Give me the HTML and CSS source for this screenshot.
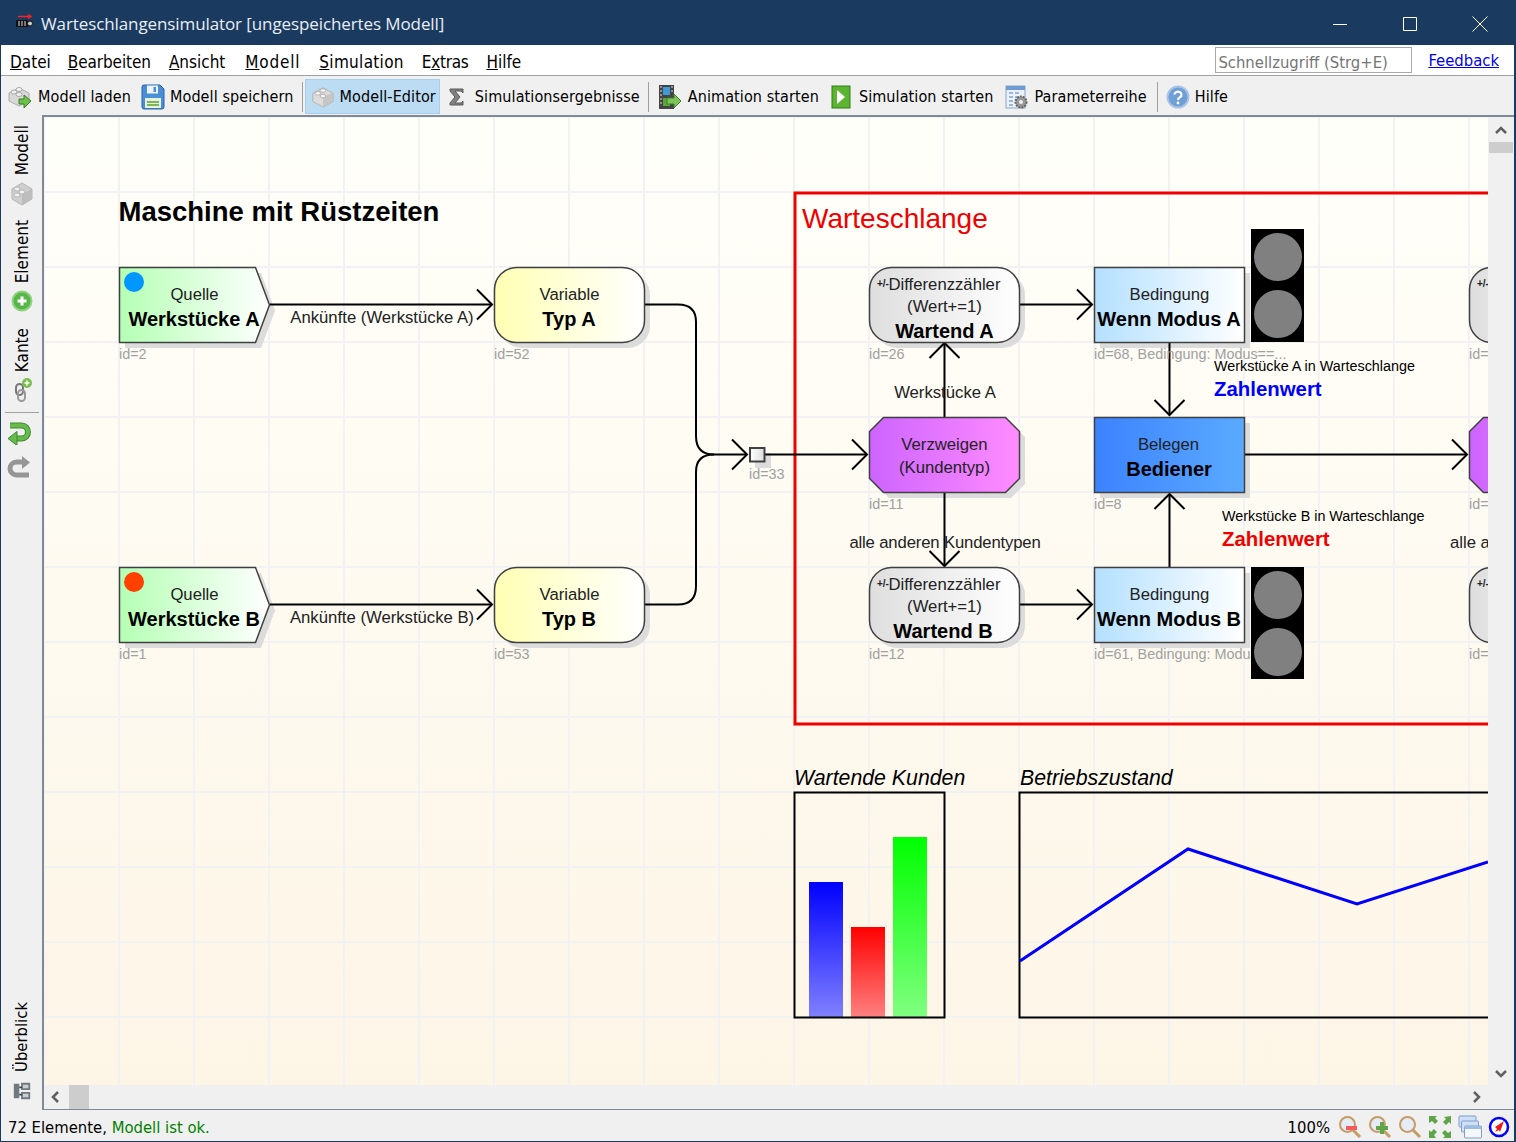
FILE: index.html
```html
<!DOCTYPE html>
<html lang="de">
<head>
  <meta charset="UTF-8" />
  <title>Warteschlangensimulator</title>
  <link rel="stylesheet" href="styles.css">
</head>
<body>
<div class="window">

  <header class="titlebar">
    <svg class="app-icon" width="18" height="14" viewBox="0 0 18 14">
      <path d="M2 2.500h13M12 .5l3 2-3 2" fill="none" stroke="#ff2020" stroke-width="1.300"/>
      <path d="M.5 6.500h11v6H.5z" fill="#111" stroke="#111"/>
      <path d="M3 7v5M6 7v5M9 7v5" stroke="#ddd"/>
      <circle cx="14" cy="9.500" r="2.500" fill="#ccc" stroke="#111"/>
    </svg>
    <span class="title">Warteschlangensimulator [ungespeichertes Modell]</span>
    <div class="win-buttons">
      <svg width="16" height="16" viewBox="0 0 16 16"><path d="M1 8.500h14" stroke="#fff"/></svg>
      <svg width="16" height="16" viewBox="0 0 16 16"><path d="M1.500 1.500h13v13h-13z" fill="none" stroke="#fff"/></svg>
      <svg width="16" height="16" viewBox="0 0 16 16"><path d="M.5.500l15 15M15.500.500l-15 15" stroke="#fff"/></svg>
    </div>
  </header>

  <nav class="menubar">
    <span class="menu-item"><u>D</u>atei</span>
    <span class="menu-item menu-bearbeiten"><u>B</u>earbeiten</span>
    <span class="menu-item"><u>A</u>nsicht</span>
    <span class="menu-item menu-modell"><u>M</u>odell</span>
    <span class="menu-item menu-simulation"><u>S</u>imulation</span>
    <span class="menu-item menu-extras">E<u>x</u>tras</span>
    <span class="menu-item"><u>H</u>ilfe</span>
    <span class="quick">Schnellzugriff (Strg+E)</span>
    <a class="feedback" href="#">Feedback</a>
  </nav>

  <div class="toolbar">
    <button class="tool">
      <svg width="26" height="26" viewBox="0 0 26 26">
        <path d="M2 9l10-5 10 5v8l-10 5-10-5z" fill="#d8d8d8" stroke="#aaa"/>
        <ellipse cx="7" cy="8" rx="3" ry="2" fill="#f2f2f2" stroke="#aaa"/>
        <ellipse cx="12" cy="5.500" rx="3" ry="2" fill="#f2f2f2" stroke="#aaa"/>
        <ellipse cx="12" cy="10.500" rx="3" ry="2" fill="#f2f2f2" stroke="#aaa"/>
        <path d="M12 15h5v-4l7 6-7 7v-4h-5z" fill="#6fbf4a" stroke="#3c7d28"/>
      </svg>
      Modell laden
    </button>
    <button class="tool">
      <svg width="24" height="26" viewBox="0 0 24 26">
        <path d="M1 3a2 2 0 0 1 2-2h16l4 4v18a2 2 0 0 1-2 2H3a2 2 0 0 1-2-2z" fill="#4a8fd6" stroke="#2a62a8"/>
        <path d="M6 1.500h11v8H6z" fill="#eef4fb"/>
        <path d="M12.500 3h2.500v5h-2.500z" fill="#4a8fd6"/>
        <path d="M4 14h16v10H4z" fill="#e6f2da"/>
        <path d="M6 18h12M6 21h12" stroke="#7db55c" stroke-width="2"/>
      </svg>
      Modell speichern
    </button>
    <span class="tool-sep"></span>
    <button class="tool tool-active">
      <svg width="24" height="26" viewBox="0 0 26 26">
        <path d="M2 9l11-6 11 6v9l-11 6-11-6z" fill="#dcdcdc" stroke="#b0b0b0"/>
        <path d="M13 13l11-5v10l-11 6z" fill="#c6c6c6"/>
        <ellipse cx="7.500" cy="9" rx="3" ry="2" fill="#f6f6f6" stroke="#b0b0b0"/>
        <ellipse cx="13" cy="6" rx="3" ry="2" fill="#f6f6f6" stroke="#b0b0b0"/>
        <ellipse cx="13" cy="12" rx="3" ry="2" fill="#f6f6f6" stroke="#b0b0b0"/>
      </svg>
      Modell-Editor
    </button>
    <button class="tool">
      <svg class="sigma" width="18" height="20" viewBox="0 0 18 20">
        <path d="M2 2h13v4l-2-2H7l5 6-5 6h6l2-2v4H2v-2l5-6-5-6z" fill="#808080" stroke="#5c5c5c"/>
      </svg>
      Simulationsergebnisse
    </button>
    <span class="tool-sep"></span>
    <button class="tool">
      <svg width="26" height="26" viewBox="0 0 24 26">
        <path d="M1 1h15v24H1z" fill="#444"/>
        <path d="M5 3h7v8H5z" fill="#3f9bd8"/>
        <path d="M5 14h7v8H5z" fill="#59a83a"/>
        <path d="M2 3h2M2 7h2M2 11h2M2 15h2M2 19h2M13 3h2M13 7h2" stroke="#ddd"/>
        <path d="M9 14h7v-4l7 7-7 7v-4H9z" fill="#7cc35a" stroke="#3f7d2a"/>
      </svg>
      Animation starten
    </button>
    <button class="tool tool-narrow-icon">
      <svg width="20" height="24" viewBox="0 0 20 24">
        <rect x="1" y="1" width="18" height="22" fill="#5bb531" stroke="#2e7d16"/>
        <path d="M6 5l8 7-8 7z" fill="#fff"/>
      </svg>
      Simulation starten
    </button>
    <button class="tool tool-params">
      <svg width="24" height="26" viewBox="0 0 24 26">
        <rect x="1" y="2" width="19" height="22" fill="#eaf1fa" stroke="#8aa6c8"/>
        <path d="M1 2h19v4H1z" fill="#6f9bd1"/>
        <path d="M4 9h4M10 9h4M4 13h4M10 13h4M4 17h4M4 21h4" stroke="#9db6d4" stroke-width="2"/>
        <circle cx="16" cy="18" r="5.500" fill="#9a9a9a" stroke="#666" stroke-width="2" stroke-dasharray="2 1"/>
        <circle cx="16" cy="18" r="2" fill="#eee"/>
      </svg>
      Parameterreihe
    </button>
    <span class="tool-sep"></span>
    <button class="tool">
      <svg width="24" height="24" viewBox="0 0 24 24">
        <circle cx="12" cy="12" r="10.500" fill="#6e9fd6" stroke="#a9c4e4" stroke-width="2"/>
        <path d="M8.500 9.500a3.500 3 0 1 1 5.500 2.600c-1.400 1-2 1.400-2 3" fill="none" stroke="#fff" stroke-width="2.200"/>
        <circle cx="12" cy="18" r="1.400" fill="#fff"/>
      </svg>
      Hilfe
    </button>
  </div>

  <div class="workspace">
    <aside class="sidebar">
      <button class="side-tab">
        <span class="side-label">Modell</span>
        <svg width="24" height="26" viewBox="0 0 24 26">
          <path d="M2 8l10-6 10 6v10l-10 6-10-6z" fill="#cfcfcf" stroke="#b5b5b5"/>
          <path d="M12 13l10-5v10l-10 6z" fill="#bdbdbd"/>
          <ellipse cx="7" cy="8" rx="3" ry="2" fill="#f2f2f2" stroke="#b5b5b5"/>
          <ellipse cx="7" cy="14" rx="3" ry="2" fill="#f2f2f2" stroke="#b5b5b5"/>
          <ellipse cx="12" cy="11" rx="3" ry="2" fill="#f2f2f2" stroke="#b5b5b5"/>
        </svg>
      </button>
      <button class="side-tab">
        <span class="side-label">Element</span>
        <svg width="22" height="22" viewBox="0 0 22 22">
          <circle cx="11" cy="11" r="9.500" fill="#58b648" stroke="#8fd37f" stroke-width="2"/>
          <path d="M11 6.500v9M6.500 11h9" stroke="#fff" stroke-width="3"/>
        </svg>
      </button>
      <button class="side-tab">
        <span class="side-label">Kante</span>
        <svg width="22" height="24" viewBox="0 0 22 24">
          <rect x="5" y="6" width="7" height="11" rx="3.500" fill="none" stroke="#777" stroke-width="2"/>
          <rect x="7" y="12" width="7" height="11" rx="3.500" fill="none" stroke="#999" stroke-width="2"/>
          <circle cx="16" cy="5" r="5" fill="#7dbf4f"/>
          <path d="M16 2.500v5M13.500 5h5" stroke="#fff" stroke-width="1.500"/>
        </svg>
      </button>
      <span class="side-sep"></span>
      <button class="side-icon">
        <svg width="24" height="24" viewBox="0 0 24 24">
          <path d="M3 4.500h11.500a6.500 6.500 0 0 1 0 13H8" fill="none" stroke="#3f8a30" stroke-width="6"/>
          <path d="M3 4.500h11.500a6.500 6.500 0 0 1 0 13H8" fill="none" stroke="#66bb4c" stroke-width="4"/>
          <path d="M10 10.500v14L1 17.500z" fill="#66bb4c" stroke="#3f8a30"/>
        </svg>
      </button>
      <button class="side-icon">
        <svg width="24" height="24" viewBox="0 0 24 24">
          <path d="M22 19H9.500a6.500 6.500 0 0 1 0-13H16" fill="none" stroke="#969696" stroke-width="5"/>
          <path d="M15 0v13l8-6.500z" fill="#969696"/>
        </svg>
      </button>
      <button class="side-tab side-tab-bottom">
        <span class="side-label">Überblick</span>
        <svg width="20" height="20" viewBox="0 0 22 20">
          <path d="M2 2h6v16H2zM10 1h10v8H10zM10 11h10v8H10z" fill="#6f7a80"/>
          <path d="M12 3h6v4h-6zM12 13h6v4h-6z" fill="#c8d0d4"/>
          <path d="M8 6h3M8 14h3" stroke="#3d4548" stroke-width="2"/>
        </svg>
      </button>
    </aside>

    <div class="editor">
      <main class="canvas">
        <svg class="diagram" width="1444" height="968" viewBox="44 117 1444 968">
          <defs>
            <linearGradient id="g-green"><stop offset="0" stop-color="#b4ffb4"/><stop offset="1" stop-color="#fff"/></linearGradient>
            <linearGradient id="g-yellow"><stop offset="0" stop-color="#ffffb4"/><stop offset="1" stop-color="#fff"/></linearGradient>
            <linearGradient id="g-grey"><stop offset="0" stop-color="#dedede"/><stop offset="1" stop-color="#fff"/></linearGradient>
            <linearGradient id="g-blue"><stop offset="0" stop-color="#b4e0ff"/><stop offset="1" stop-color="#fff"/></linearGradient>
            <linearGradient id="g-purple"><stop offset="0" stop-color="#cd64ff"/><stop offset="1" stop-color="#ff8cff"/></linearGradient>
            <linearGradient id="g-royal"><stop offset="0" stop-color="#3c82ff"/><stop offset="1" stop-color="#5aaaff"/></linearGradient>
            <linearGradient id="g-junction"><stop offset="0" stop-color="#fff"/><stop offset="1" stop-color="#dcdcdc"/></linearGradient>
            <linearGradient id="g-bar-blue" x2="0" y2="1"><stop offset="0" stop-color="#0000ff"/><stop offset="1" stop-color="#8080ff"/></linearGradient>
            <linearGradient id="g-bar-red" x2="0" y2="1"><stop offset="0" stop-color="#ff0000"/><stop offset="1" stop-color="#ff8080"/></linearGradient>
            <linearGradient id="g-bar-green" x2="0" y2="1"><stop offset="0" stop-color="#00ff00"/><stop offset="1" stop-color="#80ff80"/></linearGradient>
            <path id="arrow-r" d="M-15-15L0 0L-15 15" fill="none"/>
            <path id="shape-source" d="M0 0H136L150 37.500L136 75H0Z"/>
            <rect id="shape-round" width="150" height="75" rx="22" ry="22"/>
            <rect id="shape-rect" width="150" height="75"/>
            <path id="shape-branch" d="M14 0H136L150 14V61L136 75H14L0 61V14Z"/>
          </defs>

          <!-- Ueberschrift -->
          <text class="heading" x="118.500" y="221">Maschine mit Rüstzeiten</text>

          <!-- Warteschlange Rahmen -->
          <rect class="frame" x="795" y="193" width="720" height="531"/>
          <text class="frame-title" x="802" y="228">Warteschlange</text>

          <!-- Schatten -->
          <g class="shadows">
            <use href="#shape-source" x="125" y="273"/>
            <use href="#shape-source" x="125" y="573"/>
            <use href="#shape-round" x="500" y="273"/>
            <use href="#shape-round" x="500" y="573"/>
            <use href="#shape-round" x="875" y="273"/>
            <use href="#shape-round" x="875" y="573"/>
            <use href="#shape-rect" x="1100" y="273"/>
            <use href="#shape-rect" x="1100" y="573"/>
            <use href="#shape-rect" x="1100" y="423"/>
            <use href="#shape-branch" x="875" y="423"/>
            <rect x="755" y="453" width="16" height="15"/>
          </g>

          <!-- Kanten -->
          <g class="edges">
            <path d="M270 304.500H492"/>
            <path d="M270 604.500H492"/>
            <path d="M645 304.500H678Q696 304.500 696 322V436Q696 454.500 714 454.500H747"/>
            <path d="M645 604.500H678Q696 604.500 696 586V472Q696 454.500 714 454.500"/>
            <path d="M765 454.500H867"/>
            <path d="M944.500 417V343"/>
            <path d="M944.500 492V566"/>
            <path d="M1020 304.500H1092"/>
            <path d="M1020 604.500H1092"/>
            <path d="M1169.500 342V415"/>
            <path d="M1169.500 567V494"/>
            <path d="M1245 454.500H1467"/>
            <use href="#arrow-r" x="492" y="304.500"/>
            <use href="#arrow-r" x="492" y="604.500"/>
            <use href="#arrow-r" x="747" y="454.500"/>
            <use href="#arrow-r" x="867" y="454.500"/>
            <use href="#arrow-r" x="1092" y="304.500"/>
            <use href="#arrow-r" x="1092" y="604.500"/>
            <use href="#arrow-r" x="1467" y="454.500"/>
            <use href="#arrow-r" transform="translate(944.500 343) rotate(-90)"/>
            <use href="#arrow-r" transform="translate(944.500 566) rotate(90)"/>
            <use href="#arrow-r" transform="translate(1169.500 415) rotate(90)"/>
            <use href="#arrow-r" transform="translate(1169.500 494) rotate(-90)"/>
          </g>
          <rect class="junction" x="750" y="448" width="14.500" height="13.500" fill="url(#g-junction)"/>

          <!-- Stationen -->
          <g class="nodes">
            <use href="#shape-source" x="119.500" y="267.500" fill="url(#g-green)"/>
            <use href="#shape-source" x="119.500" y="567.500" fill="url(#g-green)"/>
            <use href="#shape-round" x="494.500" y="267.500" fill="url(#g-yellow)"/>
            <use href="#shape-round" x="494.500" y="567.500" fill="url(#g-yellow)"/>
            <use href="#shape-round" x="869.500" y="267.500" fill="url(#g-grey)"/>
            <use href="#shape-round" x="869.500" y="567.500" fill="url(#g-grey)"/>
            <use href="#shape-rect" x="1094.500" y="267.500" fill="url(#g-blue)"/>
            <use href="#shape-rect" x="1094.500" y="567.500" fill="url(#g-blue)"/>
            <use href="#shape-rect" x="1094.500" y="417.500" fill="url(#g-royal)"/>
            <use href="#shape-branch" x="869.500" y="417.500" fill="url(#g-purple)"/>
            <use href="#shape-branch" x="1469.500" y="417.500" fill="url(#g-purple)"/>
            <use href="#shape-round" x="1469.500" y="267.500" fill="url(#g-grey)"/>
            <use href="#shape-round" x="1469.500" y="567.500" fill="url(#g-grey)"/>
          </g>
          <circle cx="134" cy="282" r="10" fill="#0096ff"/>
          <circle cx="134" cy="582" r="10" fill="#ff4100"/>

          <!-- IDs -->
          <g class="node-id">
            <text x="119" y="359">id=2</text>
            <text x="119" y="659">id=1</text>
            <text x="494" y="359">id=52</text>
            <text x="494" y="659">id=53</text>
            <text x="749" y="479">id=33</text>
            <text x="869" y="359">id=26</text>
            <text x="869" y="509">id=11</text>
            <text x="869" y="659">id=12</text>
            <text x="1094" y="359">id=68, Bedingung: Modus==...</text>
            <text x="1094" y="509">id=8</text>
            <text x="1094" y="659">id=61, Bedingung: Modus==...</text>
            <text x="1469" y="359">id=71</text>
            <text x="1469" y="509">id=14</text>
            <text x="1469" y="659">id=70</text>
          </g>

          <!-- Ampeln -->
          <rect x="1251" y="229" width="53" height="113" fill="#000"/>
          <circle cx="1278" cy="257" r="24" fill="#808080"/>
          <circle cx="1278" cy="314" r="24" fill="#808080"/>
          <rect x="1251" y="567" width="53" height="112" fill="#000"/>
          <circle cx="1278" cy="595" r="24" fill="#808080"/>
          <circle cx="1278" cy="652" r="24" fill="#808080"/>

          <!-- Texte in den Stationen -->
          <g class="node-text">
            <text x="194.500" y="300">Quelle</text>
            <text x="194.500" y="600">Quelle</text>
            <text x="569.500" y="300">Variable</text>
            <text x="569.500" y="600">Variable</text>
            <text x="944.500" y="290">Differenzzähler</text>
            <text x="944.500" y="312">(Wert+=1)</text>
            <text x="944.500" y="590">Differenzzähler</text>
            <text x="944.500" y="612">(Wert+=1)</text>
            <text x="1169.500" y="300">Bedingung</text>
            <text x="1169.500" y="600">Bedingung</text>
            <text x="1168.500" y="450">Belegen</text>
            <text x="944.500" y="450">Verzweigen</text>
            <text x="944.500" y="473">(Kundentyp)</text>
          </g>
          <g class="node-name">
            <text x="194" y="326">Werkstücke A</text>
            <text x="194" y="626">Werkstücke B</text>
            <text x="569" y="326">Typ A</text>
            <text x="569" y="626">Typ B</text>
            <text x="944.500" y="338">Wartend A</text>
            <text x="943" y="638">Wartend B</text>
            <text x="1169" y="326">Wenn Modus A</text>
            <text x="1169" y="626">Wenn Modus B</text>
            <text x="1169" y="476">Bediener</text>
          </g>
          <g class="counter-mark">
            <text x="877" y="287">+/-</text>
            <text x="877" y="587">+/-</text>
            <text x="1477" y="287">+/-</text>
            <text x="1477" y="587">+/-</text>
          </g>

          <!-- Kantenbeschriftung -->
          <g class="edge-label">
            <text x="382" y="323">Ankünfte (Werkstücke A)</text>
            <text x="382" y="623">Ankünfte (Werkstücke B)</text>
            <text x="945" y="398">Werkstücke A</text>
            <text class="edge-label-tight" x="945" y="548">alle anderen Kundentypen</text>
          </g>
          <text class="edge-label-start" x="1450" y="548">alle anderen Kundentypen</text>

          <!-- Zaehler -->
          <text class="counter-label" x="1214" y="371">Werkstücke A in Warteschlange</text>
          <text class="counter-value counter-blue" x="1214" y="396">Zahlenwert</text>
          <text class="counter-label" x="1222" y="521">Werkstücke B in Warteschlange</text>
          <text class="counter-value counter-red" x="1222" y="546">Zahlenwert</text>

          <!-- Diagramme -->
          <text class="chart-title" x="794" y="785">Wartende Kunden</text>
          <rect x="809" y="882" width="34" height="135" fill="url(#g-bar-blue)"/>
          <rect x="851" y="927" width="34" height="90" fill="url(#g-bar-red)"/>
          <rect x="893" y="837" width="34" height="180" fill="url(#g-bar-green)"/>
          <rect class="chart-box" x="794.500" y="792.500" width="150" height="225"/>
          <text class="chart-title" x="1020" y="785">Betriebszustand</text>
          <rect class="chart-box" x="1019.500" y="792.500" width="520" height="225"/>
          <path class="chart-line" d="M1020 961L1188 849L1357 904L1488 862"/>
        </svg>
      </main>
      <div class="vscroll">
        <svg width="14" height="10" viewBox="0 0 14 10"><path d="M2 8l5-5 5 5" fill="none" stroke="#606060" stroke-width="2.500"/></svg>
        <span class="vscroll-thumb"></span>
        <svg class="vscroll-down" width="14" height="10" viewBox="0 0 14 10"><path d="M2 2l5 5 5-5" fill="none" stroke="#606060" stroke-width="2.500"/></svg>
      </div>
      <div class="hscroll">
        <svg width="10" height="14" viewBox="0 0 10 14"><path d="M8 2L3 7l5 5" fill="none" stroke="#606060" stroke-width="2.500"/></svg>
        <span class="hscroll-thumb"></span>
        <svg class="hscroll-right" width="10" height="14" viewBox="0 0 10 14"><path d="M2 2l5 5-5 5" fill="none" stroke="#606060" stroke-width="2.500"/></svg>
      </div>
    </div>
  </div>

  <footer class="statusbar">
    <span>72 Elemente, <span class="status-ok">Modell ist ok.</span></span>
    <div class="status-right">
      <span class="zoom-value">100%</span>
      <svg width="24" height="24" viewBox="0 0 24 24">
        <circle cx="9.500" cy="9.500" r="7.500" fill="#e4edf5" stroke="#c89a66" stroke-width="2"/>
        <path d="M15 15l7 7" stroke="#c89a66" stroke-width="3"/>
        <path d="M8 11h11v4H8z" fill="#f25c5c"/>
      </svg>
      <svg width="24" height="24" viewBox="0 0 24 24">
        <circle cx="9.500" cy="9.500" r="7.500" fill="#e4edf5" stroke="#c89a66" stroke-width="2"/>
        <path d="M15 15l7 7" stroke="#c89a66" stroke-width="3"/>
        <path d="M8 11h4V7h4v4h4v4h-4v4h-4v-4H8z" fill="#5da548"/>
      </svg>
      <svg width="24" height="24" viewBox="0 0 24 24">
        <circle cx="9.500" cy="9.500" r="7.500" fill="#e4edf5" stroke="#c89a66" stroke-width="2"/>
        <path d="M15 15l7 7" stroke="#c89a66" stroke-width="3"/>
      </svg>
      <svg width="24" height="24" viewBox="0 0 24 24">
        <path d="M1 1h8L7 3l3 3-3 3-3-3-3 2zM23 1v8l-2-2-3 3-3-3 3-3-2-2zM1 23v-8l2 2 3-3 3 3-3 3 2 3zM23 23h-8l2-2-3-3 3-3 3 3 3-2z" fill="#5da548"/>
      </svg>
      <svg width="24" height="24" viewBox="0 0 24 24">
        <rect x="1" y="1" width="17" height="11" rx="1" fill="#cfe0f5" stroke="#7d9ecb"/>
        <rect x="3.500" y="6" width="17" height="11" rx="1" fill="#cfe0f5" stroke="#7d9ecb"/>
        <rect x="6.500" y="11" width="17" height="12" rx="1" fill="#f4f8fc" stroke="#7d9ecb"/>
        <path d="M6.500 11h17v3h-17z" fill="#9cbce3"/>
      </svg>
      <svg width="22" height="22" viewBox="0 0 22 22">
        <circle cx="11" cy="11" r="9" fill="#fff" stroke="#0000ff" stroke-width="2.500"/>
        <path d="M16 5L7 11l2 2-2 3 4-2 1 2z" fill="#f01818"/>
      </svg>
    </div>
  </footer>

</div>
</body>
</html>
```
FILE: styles.css
```css
* {
  box-sizing: border-box;
  margin: 0;
  padding: 0;
}

body {
  font-family: 'DejaVu Sans Condensed', 'DejaVu Sans', sans-serif;
  font-stretch: condensed;
  background: #f0f0f0;
  color: #000;
  overflow: hidden;
}

button {
  background: none;
  border: none;
  font: inherit;
  color: inherit;
}

.window {
  width: 1516px;
  height: 1142px;
  display: flex;
  flex-direction: column;
  border-left: 1px solid #1b3a5f;
  border-right: 2px solid #1b3a5f;
  border-bottom: 1px solid #1b3a5f;
}

/* title bar */
.titlebar {
  height: 45px;
  flex: none;
  background: #1b3a5f;
  color: #fff;
  display: flex;
  align-items: center;
  padding: 2px 0 0 15px;
  font-family: 'Open Sans', sans-serif;
  font-stretch: normal;
  font-size: 17px;
}

.app-icon {
  margin-right: 7px;
  margin-top: -5px;
}

.title {
  letter-spacing: -0.1px;
  color: #e8eef5;
}

.win-buttons {
  margin-left: auto;
  display: flex;
  gap: 54px;
  padding-right: 26px;
}

/* menu */
.menubar {
  height: 31px;
  flex: none;
  background: #fff;
  border-bottom: 1px solid #a0a0a0;
  display: flex;
  align-items: center;
  padding: 3px 0 0 9px;
  gap: 18px;
  font-size: 17px;
}

.menu-bearbeiten {
  margin-left: -1px;
  letter-spacing: -0.1px;
}

.menu-modell {
  margin-left: 2px;
  letter-spacing: 0.8px;
}

.menu-simulation {
  margin-left: 1px;
  letter-spacing: 0.3px;
}

.menu-extras {
  letter-spacing: -0.3px;
}

.quick {
  margin: -3px 0 0 auto;
  width: 197px;
  height: 26px;
  border: 1px solid #a9a9a9;
  color: #757575;
  padding: 5px 2px 0;
  font-size: 16.500px;
  white-space: nowrap;
  overflow: hidden;
}

.feedback {
  color: #0000ee;
  font-size: 16.500px;
  margin: -3px 15px 0 -2px;
}

/* toolbar */
.toolbar {
  height: 39px;
  flex: none;
  background: #f0f0f0;
  display: flex;
  align-items: center;
  padding: 2px 0 0 1px;
  font-size: 16px;
  letter-spacing: 0.1px;
}

.tool {
  height: 35px;
  display: flex;
  align-items: center;
  gap: 5px;
  padding: 0 5px;
  white-space: nowrap;
  letter-spacing: inherit;
}

.tool-active {
  background: #bcdcf4;
  border: 1px solid #a8d0ee;
  padding: 0 3px 0 5px;
  margin-left: -1px;
}

.tool-narrow-icon svg {
  margin: 0 3px 0 2px;
}

.tool-params {
  margin: 0 2px;
}

.sigma {
  margin: 0 4px 0 3px;
}

.tool-sep {
  width: 1px;
  height: 30px;
  background: #a0a0a0;
  margin: 0 3px;
}

/* workspace */
.workspace {
  flex: 1;
  display: flex;
  min-height: 0;
}

.sidebar {
  width: 41px;
  flex: none;
  background: #f0f0f0;
  display: flex;
  flex-direction: column;
  align-items: center;
  padding-top: 10px;
  font-size: 17px;
}

.side-tab {
  display: flex;
  flex-direction: column;
  align-items: center;
  gap: 6px;
  margin-bottom: 13px;
}

.side-tab:nth-child(2) {
  margin-bottom: 16px;
}

.side-label {
  writing-mode: vertical-rl;
  transform: rotate(180deg);
}

.side-tab-bottom {
  margin-top: auto;
  margin-bottom: 9px;
  gap: 9px;
  font-size: 16.500px;
}

.side-sep {
  width: 34px;
  height: 1px;
  background: #a0a0a0;
  margin: -3px 0 3px;
}

.side-icon {
  height: 35px;
  display: flex;
  align-items: center;
  margin-right: 5px;
}

.editor {
  flex: 1;
  display: grid;
  grid-template-columns: 1444px 1fr;
  grid-template-rows: 968px 24px;
  border: 2px solid #7f8a96;
  border-right: none;
}

/* model canvas */
.canvas {
  overflow: hidden;
  background-color: #fffffa;
  background-image:
    linear-gradient(#f2f2f4 2px, transparent 2px),
    linear-gradient(90deg, #f2f2f4 2px, transparent 2px),
    linear-gradient(#fffffa, #fdf5e6);
  background-size: 75px 75px, 75px 75px, 100% 100%;
  background-position: 0 74px, 74px 0, 0 0;
}

.diagram {
  display: block;
}

.heading {
  font: bold 27.500px 'Liberation Sans', sans-serif;
}

.frame {
  fill: none;
  stroke: #f00000;
  stroke-width: 3;
}

.frame-title {
  font: 28px 'Liberation Sans', sans-serif;
  fill: #f00000;
}

.edges path,
.edges use {
  fill: none;
  stroke: #000;
  stroke-width: 2;
}

.junction {
  stroke: #404040;
  stroke-width: 2;
}

.shadows use,
.shadows rect {
  fill: #dcdcdc;
}

.nodes use {
  stroke: #404040;
  stroke-width: 1.500;
}

.node-text text,
.edge-label text {
  font: 16.700px 'Liberation Sans', sans-serif;
  text-anchor: middle;
  fill: #222;
}

.edge-label .edge-label-tight {
  letter-spacing: -0.15px;
}

.edge-label-start {
  font: 16.700px 'Liberation Sans', sans-serif;
  fill: #222;
}

.node-name text {
  font: bold 20px 'Liberation Sans', sans-serif;
  text-anchor: middle;
}

.counter-mark text {
  font: bold 10px 'Liberation Sans', sans-serif;
  fill: #222;
}

.node-id text {
  font: 14.400px 'Liberation Sans', sans-serif;
  fill: #a0a0a0;
}

.counter-label {
  font: 14.350px 'Liberation Sans', sans-serif;
}

.counter-value {
  font: bold 20.400px 'Liberation Sans', sans-serif;
}

.counter-blue {
  fill: #0000ff;
}

.counter-red {
  fill: #f00000;
}

.chart-title {
  font: italic 21.300px 'Liberation Sans', sans-serif;
}

.chart-box {
  fill: none;
  stroke: #000;
  stroke-width: 2;
}

.chart-line {
  fill: none;
  stroke: #0000ff;
  stroke-width: 3;
}

/* scroll bars */
.vscroll {
  background: #f0f0f0;
  display: flex;
  flex-direction: column;
  align-items: center;
  padding: 8px 0 6px;
}

.vscroll-thumb {
  width: 24px;
  height: 11px;
  background: #cdcdcd;
  margin-top: 7px;
}

.vscroll-down {
  margin-top: auto;
}

.hscroll {
  background: #f0f0f0;
  display: flex;
  align-items: center;
  padding: 0 6px;
  grid-column: 1 / 3;
}

.hscroll-thumb {
  width: 20px;
  height: 24px;
  background: #cdcdcd;
  margin-left: 9px;
}

.hscroll-right {
  margin-left: auto;
  margin-right: 26px;
}

/* status bar */
.statusbar {
  flex: none;
  height: 31px;
  display: flex;
  align-items: center;
  padding: 3px 4px 0 7px;
  font-size: 16.500px;
  background: #f0f0f0;
}

.status-ok {
  color: #008000;
}

.status-right {
  margin-left: auto;
  display: flex;
  align-items: center;
  gap: 6px;
}

.zoom-value {
  margin-right: 2px;
}
```
